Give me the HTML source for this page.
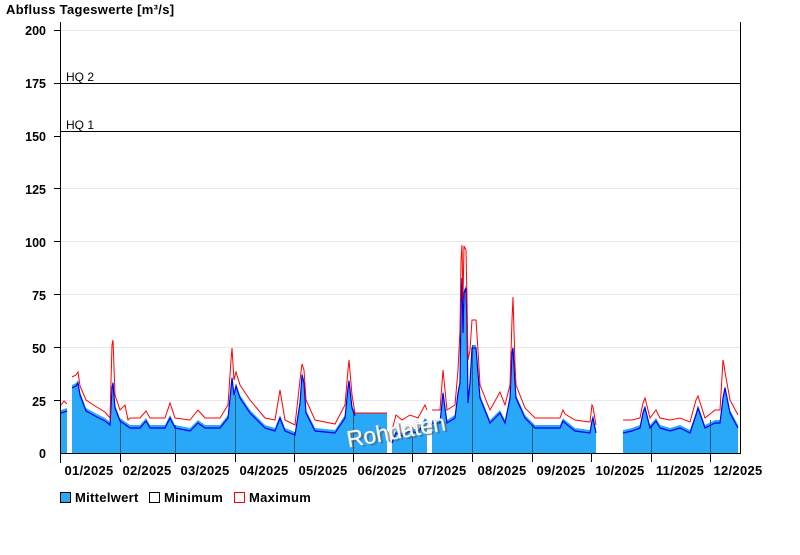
<!DOCTYPE html>
<html><head><meta charset="utf-8"><style>
body{margin:0;background:#fff;width:800px;height:550px;overflow:hidden;font-family:"Liberation Sans",Arial,sans-serif}
svg text{font-family:"Liberation Sans",Arial,sans-serif}
</style></head><body>
<svg width="800" height="550" xmlns="http://www.w3.org/2000/svg">
<text x="6" y="14" font-size="13" font-weight="bold" letter-spacing="0.3">Abfluss Tageswerte [m³/s]</text>
<g stroke="#e8e8e8" stroke-width="1">
<line x1="61" x2="740" y1="30.5" y2="30.5"/><line x1="61" x2="740" y1="188.5" y2="188.5"/><line x1="61" x2="740" y1="241.5" y2="241.5"/><line x1="61" x2="740" y1="294.5" y2="294.5"/><line x1="61" x2="740" y1="347.5" y2="347.5"/><line x1="61" x2="740" y1="400.5" y2="400.5"/>
</g>
<g font-size="12.5" font-weight="bold" text-anchor="end">
<text x="46" y="35">200</text><text x="46" y="88">175</text><text x="46" y="141">150</text><text x="46" y="194">125</text><text x="46" y="247">100</text><text x="46" y="300">75</text><text x="46" y="353">50</text><text x="46" y="406">25</text><text x="46" y="458">0</text>
</g>
<g stroke="#000"><line x1="54" x2="60" y1="30.5" y2="30.5"/><line x1="54" x2="60" y1="83.5" y2="83.5"/><line x1="54" x2="60" y1="136.5" y2="136.5"/><line x1="54" x2="60" y1="188.5" y2="188.5"/><line x1="54" x2="60" y1="241.5" y2="241.5"/><line x1="54" x2="60" y1="294.5" y2="294.5"/><line x1="54" x2="60" y1="347.5" y2="347.5"/><line x1="54" x2="60" y1="400.5" y2="400.5"/></g>
<path fill="#2aa8f8" d="M61,453 L61,410 L67,408 L67,453 Z M72,453 L72,385 L76,383 L78,380 L80,392 L86,408 L95,413 L105,418 L110,422 L112,385 L113,380 L115,405 L120,418 L130,425 L140,425 L146,418 L150,425 L165,425 L170,415 L175,425 L190,428 L198,420 L205,425 L220,425 L228,415 L231,385 L232,375 L234,392 L236,383 L240,395 L250,410 L265,425 L275,428 L280,415 L285,428 L295,432 L300,400 L302,372 L304,380 L306,410 L315,428 L335,430 L345,415 L348,385 L349,378 L352,405 L355,413 L387,413 L387,453 Z M392,453 L392,440 L396,430 L402,433 L410,428 L418,430 L425,418 L427,420 L427,453 Z M432,453 L432,420 L440,420 L443,390 L447,420 L455,415 L458,390 L460,380 L461,300 L462,275 L463,330 L464,290 L466,285 L467,320 L468,400 L470,380 L472,345 L476,345 L478,370 L480,395 L490,420 L500,410 L505,420 L510,395 L512,350 L513,345 L515,380 L516,395 L525,415 L535,425 L560,425 L563,418 L565,420 L575,428 L590,430 L592,418 L593,415 L596,430 L596,453 Z M623,453 L623,430 L632,428 L640,425 L643,410 L645,405 L650,425 L656,418 L660,425 L670,428 L680,425 L690,430 L696,412 L698,405 L705,425 L715,420 L720,420 L723,395 L725,385 L730,410 L738,425 L738,453 Z"/>
<g stroke="#2a5a7a" stroke-width="1"><line x1="120.5" x2="120.5" y1="420" y2="453"/><line x1="175.5" x2="175.5" y1="425" y2="453"/><line x1="235.5" x2="235.5" y1="395" y2="453"/><line x1="294.5" x2="294.5" y1="432" y2="453"/><line x1="353.5" x2="353.5" y1="413" y2="453"/><line x1="412.5" x2="412.5" y1="430" y2="453"/><line x1="472.5" x2="472.5" y1="345" y2="453"/><line x1="532.5" x2="532.5" y1="425" y2="453"/><line x1="651.5" x2="651.5" y1="425" y2="453"/><line x1="710.5" x2="710.5" y1="420" y2="453"/></g>
<g fill="none" stroke="#0000ee" stroke-width="1.2" transform="translate(0,3)">
<polyline points="61,410 67,408"/>
<polyline points="72,385 76,383 78,380 80,392 86,408 95,413 105,418 110,422 112,385 113,380 115,405 120,418 130,425 140,425 146,418 150,425 165,425 170,415 175,425 190,428 198,420 205,425 220,425 228,415 231,385 232,375 234,392 236,383 240,395 250,410 265,425 275,428 280,415 285,428 295,432 300,400 302,372 304,380 306,410 315,428 335,430 345,415 348,385 349,378 352,405 355,413"/>
<polyline points="392,440 396,430 402,433 410,428 418,430 425,418 427,420"/>
<polyline points="432,420 440,420 443,390 447,420 455,415 458,390 460,380 461,300 462,275 463,330 464,290 466,285 467,320 468,400 470,380 472,345 476,345 478,370 480,395 490,420 500,410 505,420 510,395 512,350 513,345 515,380 516,395 525,415 535,425 560,425 563,418 565,420 575,428 590,430 592,418 593,415 596,430"/>
<polyline points="623,430 632,428 640,425 643,410 645,405 650,425 656,418 660,425 670,428 680,425 690,430 696,412 698,405 705,425 715,420 720,420 723,395 725,385 730,410 738,425"/>
</g>
<g fill="none" stroke="#ff0000" stroke-width="1">
<polyline points="61,405 64,401 67,404"/>
<polyline points="72,377 76,375 78,372 80,386 86,400 95,406 105,412 110,418 112,345 113,340 115,395 120,410 125,405 128,420 130,418 140,418 146,411 150,418 165,418 170,403 175,418 190,420 198,410 205,418 220,418 228,405 231,360 232,348 234,380 236,372 240,385 250,400 265,418 275,420 280,390 285,420 295,425 300,380 302,364 304,370 306,400 315,420 335,424 345,405 348,370 349,360 352,395 355,413 387,413"/>
<polyline points="392,430 396,415 402,420 410,415 418,418 425,405 427,410"/>
<polyline points="432,410 440,410 443,370 447,410 455,405 458,370 460,330 461,260 462,245 463,300 464,246 466,250 467,300 468,360 470,350 472,320 476,320 478,350 480,385 490,410 500,392 505,405 510,385 512,320 513,297 515,365 516,385 525,408 535,418 560,418 563,410 565,414 575,420 590,422 592,405 593,407 596,425"/>
<polyline points="623,420 632,420 640,418 643,403 645,398 650,418 656,410 660,418 670,420 680,418 690,422 696,400 698,396 705,418 715,410 720,410 723,360 724,365 725,372 730,400 738,415"/>
</g>
<line x1="61" x2="740" y1="83.5" y2="83.5" stroke="#000"/>
<line x1="61" x2="740" y1="131.5" y2="131.5" stroke="#000"/>
<text x="66" y="81" font-size="12">HQ 2</text>
<text x="66" y="129" font-size="12">HQ 1</text>
<g stroke="#000"><line x1="60.5" x2="60.5" y1="22" y2="463"/><line x1="740.5" x2="740.5" y1="22" y2="453"/><line x1="60" x2="741" y1="453.5" y2="453.5"/></g>
<g stroke="#000"><line x1="120.5" x2="120.5" y1="453" y2="462"/><line x1="175.5" x2="175.5" y1="453" y2="462"/><line x1="235.5" x2="235.5" y1="453" y2="462"/><line x1="294.5" x2="294.5" y1="453" y2="462"/><line x1="353.5" x2="353.5" y1="453" y2="462"/><line x1="412.5" x2="412.5" y1="453" y2="462"/><line x1="472.5" x2="472.5" y1="453" y2="462"/><line x1="532.5" x2="532.5" y1="453" y2="462"/><line x1="591.5" x2="591.5" y1="453" y2="462"/><line x1="651.5" x2="651.5" y1="453" y2="462"/><line x1="710.5" x2="710.5" y1="453" y2="462"/></g>
<g font-size="13" font-weight="bold" text-anchor="middle" letter-spacing="0.3">
<text x="89" y="475">01/2025</text><text x="147" y="475">02/2025</text><text x="205" y="475">03/2025</text><text x="264" y="475">04/2025</text><text x="323" y="475">05/2025</text><text x="382" y="475">06/2025</text><text x="442" y="475">07/2025</text><text x="502" y="475">08/2025</text><text x="561" y="475">09/2025</text><text x="620" y="475">10/2025</text><text x="680" y="475">11/2025</text><text x="738" y="475">12/2025</text>
</g>
<g transform="rotate(-10 395 430)" font-size="23">
<text x="348" y="441" fill="#555" opacity="0.6">Rohdaten</text>
<text x="346" y="439" fill="#fff" stroke="#ddd" stroke-width="0.5">Rohdaten</text>
</g>
<rect x="60.5" y="492.5" width="10" height="10" fill="#2aa8f8" stroke="#000"/>
<text x="75" y="502" font-size="13" font-weight="bold" letter-spacing="0.3">Mittelwert</text>
<rect x="149.5" y="492.5" width="10" height="10" fill="#fff" stroke="#000"/>
<text x="164" y="502" font-size="13" font-weight="bold" letter-spacing="0.3">Minimum</text>
<rect x="234.5" y="492.5" width="10" height="10" fill="#fff" stroke="#ff0000"/>
<text x="249" y="502" font-size="13" font-weight="bold" letter-spacing="0.3">Maximum</text>
</svg>
</body></html>
